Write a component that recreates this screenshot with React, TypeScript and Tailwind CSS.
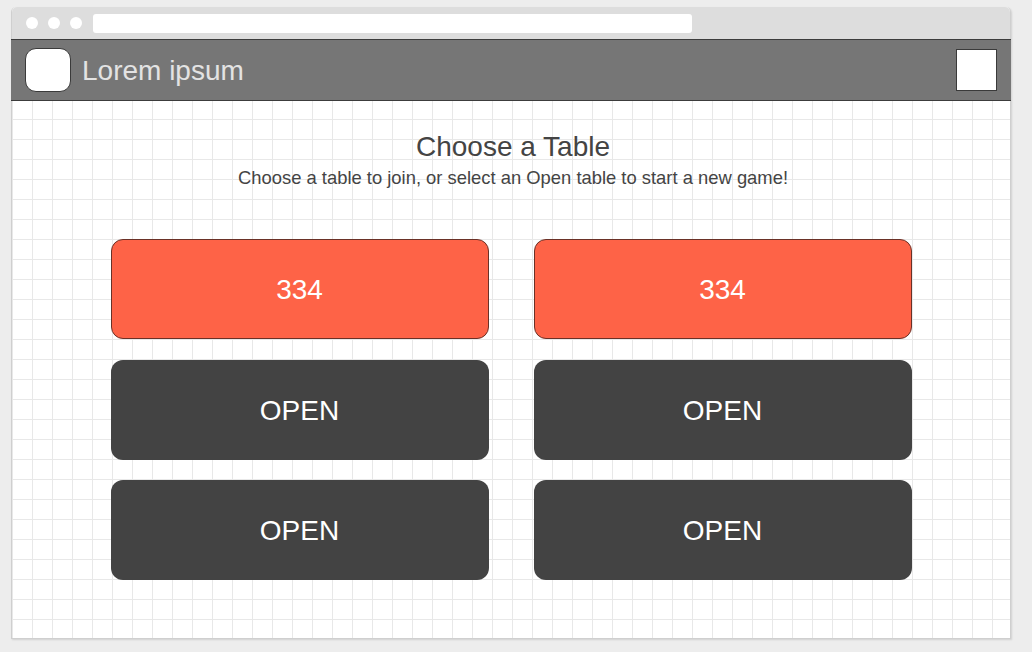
import React from 'react'

const tables: { label: string; taken: boolean }[] = [
  { label: '334', taken: true },
  { label: '334', taken: true },
  { label: 'OPEN', taken: false },
  { label: 'OPEN', taken: false },
  { label: 'OPEN', taken: false },
  { label: 'OPEN', taken: false },
]

export default function App() {
  return (
    <div className="w-[1032px] h-[652px] bg-[#ededed] pt-[7px] pl-[11px] font-['Liberation_Sans',Arial,sans-serif] overflow-hidden">
      <div className="w-[1000px] h-[632px] flex flex-col bg-white border-x border-b border-[#cfcfcf] rounded-t-[5px] shadow-[1px_1px_2px_rgba(0,0,0,0.12)]">

        {/* ── Browser chrome ─────────────────────────────────────── */}
        <div className="h-[32px] shrink-0 bg-[#dddddd] rounded-t-[5px] flex items-center pl-[14px] pr-[318px]">
          <div className="flex gap-[10px]">
            <span className="size-[12px] rounded-full bg-white" />
            <span className="size-[12px] rounded-full bg-white" />
            <span className="size-[12px] rounded-full bg-white" />
          </div>
          <div className="ml-[11px] flex-1 h-[19px] bg-white rounded-[3px]" />
        </div>

        {/* ── App header ─────────────────────────────────────────── */}
        <header className="h-[62px] shrink-0 bg-[#767676] border-y border-[#3c3c3c] -mx-px px-[14px] flex items-center">
          <div className="w-[46px] h-[44px] rounded-[11px] bg-white border border-[#3a3a3a]" />
          <span className="ml-[11px] mt-[2px] text-[28px] text-[#e3e3e3] leading-none">Lorem ipsum</span>
          <div className="ml-auto w-[41px] h-[42px] bg-white border border-[#3a3a3a]" />
        </header>

        {/* ── Content ────────────────────────────────────────────── */}
        <main className="flex-1 bg-white bg-[linear-gradient(to_right,#e8e8e8_1px,transparent_1px),linear-gradient(to_bottom,#e8e8e8_1px,transparent_1px)] bg-[size:20px_20px] bg-[position:0_-2px] pt-[30px]">
          <h1 className="text-center text-[28px] leading-[32px] text-[#444444] pl-[4px]">Choose a Table</h1>
          <p className="mt-[5px] text-center text-[18.4px] leading-[20px] text-[#444444] pl-[4px]">
            Choose a table to join, or select an Open table to start a new game!
          </p>

          <div className="mt-[51px] mx-auto w-[801px] grid grid-cols-[378px_378px] gap-x-[45px] gap-y-[20.5px]">
            {tables.map((t, i) => (
              <button
                key={i}
                className={`h-[100px] rounded-[12px] flex items-center justify-center text-[28px] text-white leading-none pt-[2px] ${
                  t.taken ? 'bg-[#fe6347] border border-[#6a3127]' : 'bg-[#434343]'
                }`}
              >
                {t.label}
              </button>
            ))}
          </div>
        </main>
      </div>
    </div>
  )
}
